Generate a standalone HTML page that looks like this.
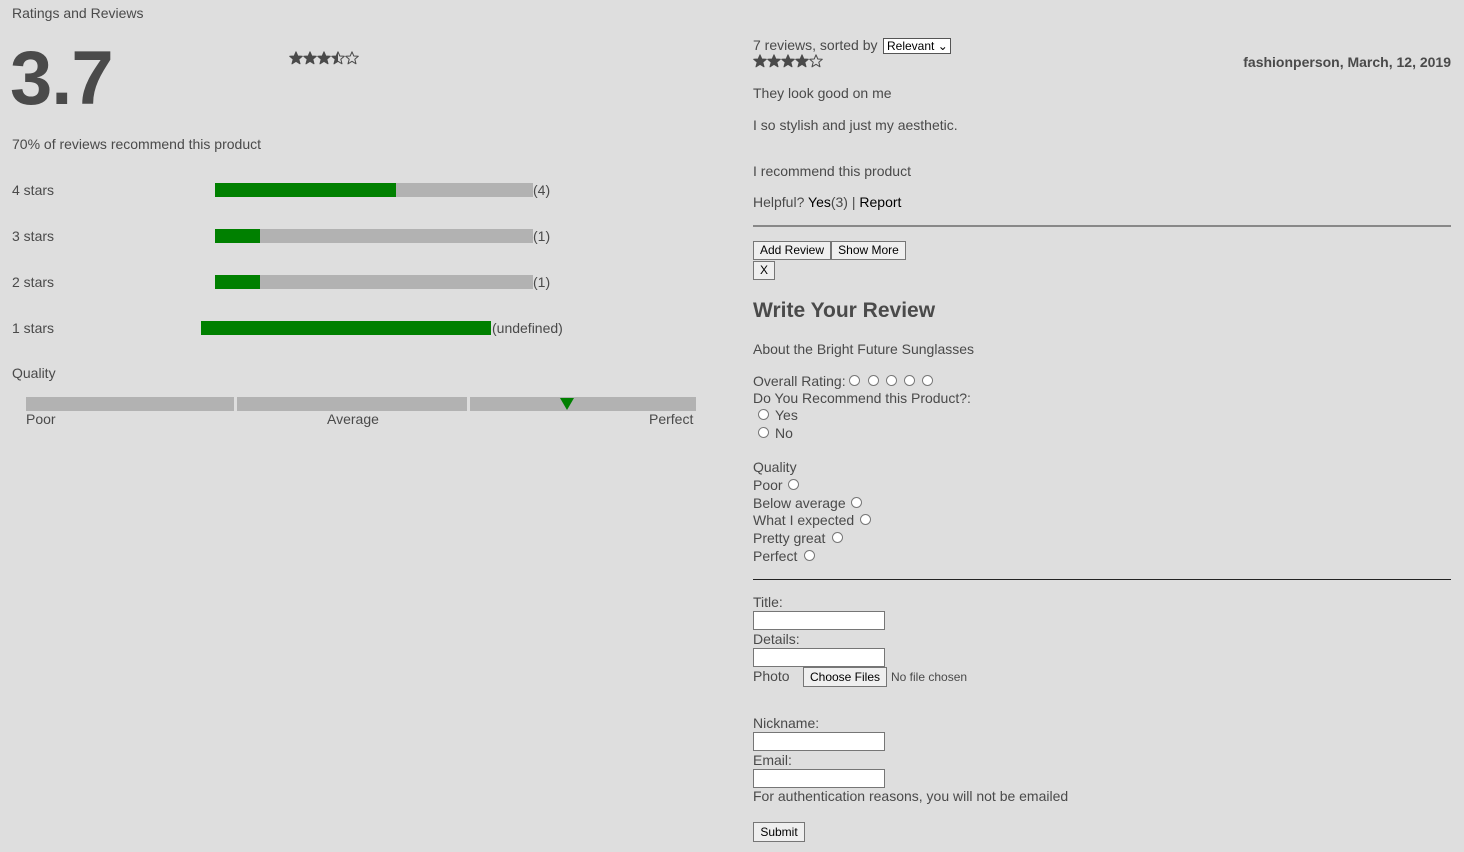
<!DOCTYPE html>
<html><head><meta charset="utf-8"><style>
body{margin:0;width:1464px;height:852px;background:#dedede;font-family:"Liberation Sans",sans-serif;color:#4a4a4a;position:relative;overflow:hidden}
.t{position:absolute;font-size:14px;line-height:16px;white-space:nowrap}
.b{position:absolute}
.r{position:absolute;width:9px;height:9px;border:1px solid #777;border-radius:50%;background:#fff}
.btn{position:absolute;box-sizing:border-box;border:1px solid #767676;background:#efefef;font-size:12px;color:#000;text-align:center;line-height:16px}
.in{position:absolute;box-sizing:border-box;width:132px;height:19px;border:1px solid #767676;background:#fff}
</style></head><body>
<svg width="0" height="0" style="position:absolute"><defs>
<linearGradient id="half"><stop offset="50%" stop-color="#4a4a4a"/><stop offset="50%" stop-color="transparent"/></linearGradient>
</defs></svg>
<div class="t" style="left:12px;top:5px">Ratings and Reviews</div>
<div class="t" style="left:10px;top:41px;font-size:76px;line-height:76px;font-weight:bold;letter-spacing:-1px">3.7</div>
<svg class="b" style="left:289px;top:51px" width="72" height="14" viewBox="0 0 72 14">
<g stroke="#4a4a4a" stroke-width="1" stroke-linejoin="round">
<polygon transform="translate(0,0)" points="7,0.8 8.8,5 13.3,5.3 9.8,8.2 11,12.8 7,10.3 3,12.8 4.2,8.2 0.7,5.3 5.2,5" fill="#4a4a4a"/>
<polygon transform="translate(14,0)" points="7,0.8 8.8,5 13.3,5.3 9.8,8.2 11,12.8 7,10.3 3,12.8 4.2,8.2 0.7,5.3 5.2,5" fill="#4a4a4a"/>
<polygon transform="translate(28,0)" points="7,0.8 8.8,5 13.3,5.3 9.8,8.2 11,12.8 7,10.3 3,12.8 4.2,8.2 0.7,5.3 5.2,5" fill="#4a4a4a"/>
<polygon transform="translate(42,0)" points="7,0.8 8.8,5 13.3,5.3 9.8,8.2 11,12.8 7,10.3 3,12.8 4.2,8.2 0.7,5.3 5.2,5" fill="url(#half)"/>
<polygon transform="translate(56,0)" points="7,0.8 8.8,5 13.3,5.3 9.8,8.2 11,12.8 7,10.3 3,12.8 4.2,8.2 0.7,5.3 5.2,5" fill="none"/>
</g></svg>
<div class="t" style="left:12px;top:136px">70% of reviews recommend this product</div>

<div class="t" style="left:12px;top:182px">4 stars</div>
<div class="b" style="left:215px;top:183px;width:318px;height:14px;background:#b2b2b2"></div>
<div class="b" style="left:215px;top:183px;width:181px;height:14px;background:#008000"></div>
<div class="t" style="left:533px;top:182px">(4)</div>

<div class="t" style="left:12px;top:228px">3 stars</div>
<div class="b" style="left:215px;top:229px;width:318px;height:14px;background:#b2b2b2"></div>
<div class="b" style="left:215px;top:229px;width:45px;height:14px;background:#008000"></div>
<div class="t" style="left:533px;top:228px">(1)</div>

<div class="t" style="left:12px;top:274px">2 stars</div>
<div class="b" style="left:215px;top:275px;width:318px;height:14px;background:#b2b2b2"></div>
<div class="b" style="left:215px;top:275px;width:45px;height:14px;background:#008000"></div>
<div class="t" style="left:533px;top:274px">(1)</div>

<div class="t" style="left:12px;top:320px">1 stars</div>
<div class="b" style="left:201px;top:321px;width:290px;height:14px;background:#008000"></div>
<div class="t" style="left:492px;top:320px">(undefined)</div>

<div class="t" style="left:12px;top:365px">Quality</div>
<div class="b" style="left:26px;top:397px;width:208px;height:14px;background:#b2b2b2"></div>
<div class="b" style="left:237px;top:397px;width:230px;height:14px;background:#b2b2b2"></div>
<div class="b" style="left:470px;top:397px;width:226px;height:14px;background:#b2b2b2"></div>
<div class="b" style="left:560px;top:398px;width:0;height:0;border-left:7px solid transparent;border-right:7px solid transparent;border-top:12px solid #008000"></div>
<div class="t" style="left:26px;top:411px">Poor</div>
<div class="t" style="left:327px;top:411px">Average</div>
<div class="t" style="left:649px;top:411px">Perfect</div>

<div class="t" style="left:753px;top:37px">7 reviews, sorted by</div>
<div class="b" style="left:883px;top:38px;height:14px;border:1px solid #555;background:#fff;font-size:12px;line-height:14px;color:#000;padding-left:3px;width:63px">Relevant ⌄</div>
<svg class="b" style="left:753px;top:54px" width="72" height="14" viewBox="0 0 72 14">
<g stroke="#4a4a4a" stroke-width="1" stroke-linejoin="round">
<polygon transform="translate(0,0)" points="7,0.8 8.8,5 13.3,5.3 9.8,8.2 11,12.8 7,10.3 3,12.8 4.2,8.2 0.7,5.3 5.2,5" fill="#4a4a4a"/>
<polygon transform="translate(14,0)" points="7,0.8 8.8,5 13.3,5.3 9.8,8.2 11,12.8 7,10.3 3,12.8 4.2,8.2 0.7,5.3 5.2,5" fill="#4a4a4a"/>
<polygon transform="translate(28,0)" points="7,0.8 8.8,5 13.3,5.3 9.8,8.2 11,12.8 7,10.3 3,12.8 4.2,8.2 0.7,5.3 5.2,5" fill="#4a4a4a"/>
<polygon transform="translate(42,0)" points="7,0.8 8.8,5 13.3,5.3 9.8,8.2 11,12.8 7,10.3 3,12.8 4.2,8.2 0.7,5.3 5.2,5" fill="#4a4a4a"/>
<polygon transform="translate(56,0)" points="7,0.8 8.8,5 13.3,5.3 9.8,8.2 11,12.8 7,10.3 3,12.8 4.2,8.2 0.7,5.3 5.2,5" fill="none"/>
</g></svg>
<div class="t" style="right:13px;top:54px;font-weight:bold">fashionperson, March, 12, 2019</div>
<div class="t" style="left:753px;top:85px">They look good on me</div>
<div class="t" style="left:753px;top:117px">I so stylish and just my aesthetic.</div>
<div class="t" style="left:753px;top:163px">I recommend this product</div>
<div class="t" style="left:753px;top:194px">Helpful? <span style="color:#000">Yes</span>(3) | <span style="color:#000">Report</span></div>
<div class="b" style="left:753px;top:225px;width:698px;height:2px;background:#888"></div>
<div class="btn" style="left:753px;top:241px;width:78px;height:19px">Add Review</div>
<div class="btn" style="left:831px;top:241px;width:75px;height:19px">Show More</div>
<div class="btn" style="left:753px;top:261px;width:22px;height:19px">X</div>
<div class="t" style="left:753px;top:299px;font-size:21px;line-height:24px;font-weight:bold">Write Your Review</div>
<div class="t" style="left:753px;top:341px">About the Bright Future Sunglasses</div>
<div class="t" style="left:753px;top:373px">Overall Rating:</div>
<div class="r" style="left:849px;top:375px"></div><div class="r" style="left:868px;top:375px"></div><div class="r" style="left:886px;top:375px"></div><div class="r" style="left:904px;top:375px"></div><div class="r" style="left:922px;top:375px"></div>
<div class="t" style="left:753px;top:390px">Do You Recommend this Product?:</div>
<div class="r" style="left:758px;top:409px"></div><div class="t" style="left:775px;top:407px">Yes</div>
<div class="r" style="left:758px;top:427px"></div><div class="t" style="left:775px;top:425px">No</div>
<div class="t" style="left:753px;top:459px">Quality</div>
<div class="t" style="left:753px;top:477px">Poor</div><div class="r" style="left:788px;top:479px"></div>
<div class="t" style="left:753px;top:495px">Below average</div><div class="r" style="left:851px;top:497px"></div>
<div class="t" style="left:753px;top:512px">What I expected</div><div class="r" style="left:860px;top:514px"></div>
<div class="t" style="left:753px;top:530px">Pretty great</div><div class="r" style="left:832px;top:532px"></div>
<div class="t" style="left:753px;top:548px">Perfect</div><div class="r" style="left:804px;top:550px"></div>
<div class="b" style="left:753px;top:579px;width:698px;height:1px;background:#222"></div>
<div class="t" style="left:753px;top:594px">Title:</div>
<div class="in" style="left:753px;top:611px"></div>
<div class="t" style="left:753px;top:631px">Details:</div>
<div class="in" style="left:753px;top:648px"></div>
<div class="t" style="left:753px;top:668px">Photo</div>
<div class="btn" style="left:803px;top:667px;width:84px;height:20px;line-height:18px">Choose Files</div>
<div class="t" style="left:891px;top:669px;font-size:12px">No file chosen</div>
<div class="t" style="left:753px;top:715px">Nickname:</div>
<div class="in" style="left:753px;top:732px"></div>
<div class="t" style="left:753px;top:752px">Email:</div>
<div class="in" style="left:753px;top:769px"></div>
<div class="t" style="left:753px;top:788px">For authentication reasons, you will not be emailed</div>
<div class="btn" style="left:753px;top:822px;width:52px;height:20px;line-height:18px">Submit</div>
</body></html>
